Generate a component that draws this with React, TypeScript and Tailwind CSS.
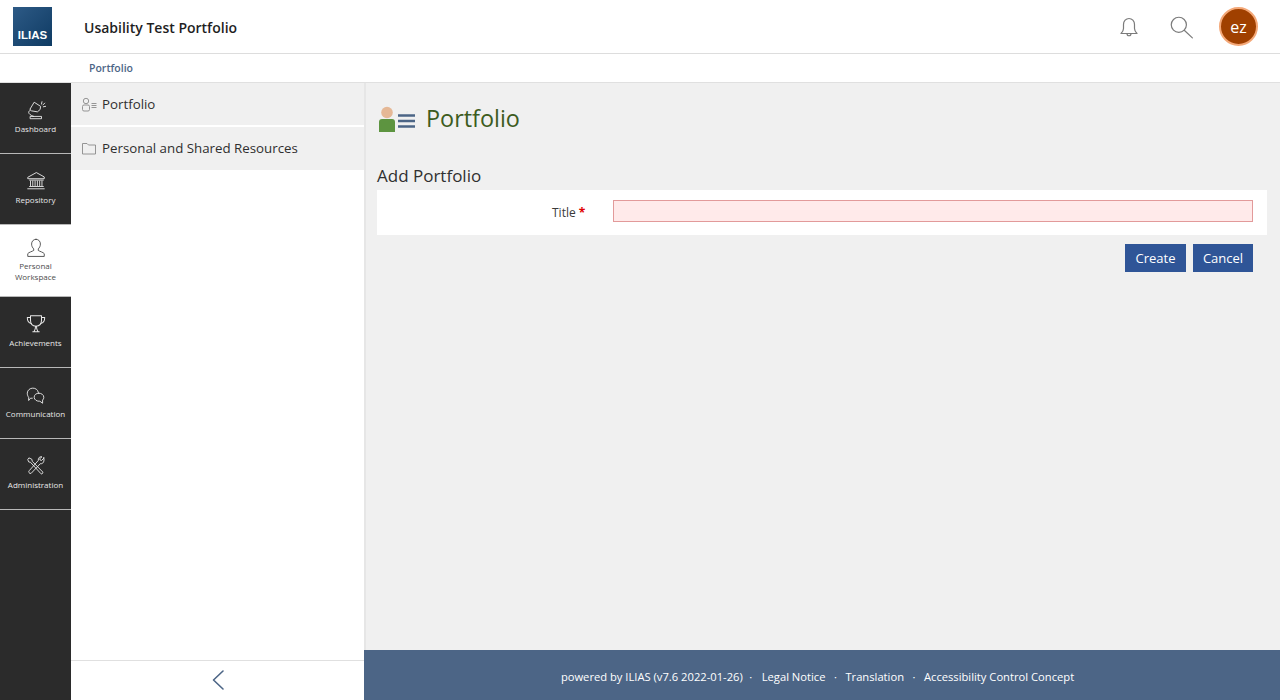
import type { ReactNode } from "react";

function Svg({ size = 24, width = 1.2, color = "currentColor", children }: { size?: number; width?: number; color?: string; children: ReactNode }) {
  return (
    <svg width={size} height={size} viewBox="0 0 24 24" fill="none" stroke={color} strokeWidth={width} strokeLinecap="round" strokeLinejoin="round">
      {children}
    </svg>
  );
}

const nav: { label: string[]; active?: boolean; h: string; icon: ReactNode }[] = [
  {
    label: ["Dashboard"],
    h: "h-[71px]",
    icon: (
      <Svg size={22} width={1}>
        <path d="M6 21.500h12v-2.500H6z" />
        <path d="M9.500 19c-3.500-1-5.500-3-5.500-4.500 0-1 .8-1.800 2-2.500" />
        <path d="M5.500 11L10 3.500l7 4.500-.5 3.500-3 2.500-6-1z" />
        <path d="M18 5.500l.5-2.500M20 8.500l2.500-.5M19.500 6.500l2-2" />
      </Svg>
    ),
  },
  {
    label: ["Repository"],
    h: "h-[71px]",
    icon: (
      <Svg size={22} width={1}>
        <path d="M12 3L3 8v1.500h18V8z" />
        <path d="M6 12v5M8.500 12v5M11 12v5M13.500 12v5M16 12v5M18.500 12v5" />
        <path d="M5 11h15M5 18h15M3 20.500h18" />
      </Svg>
    ),
  },
  {
    label: ["Personal", "Workspace"],
    active: true,
    h: "h-[72px]",
    icon: (
      <Svg size={22} width={1}>
        <path d="M12 2.500c-3 0-4.800 2.300-4.800 5.200 0 2.200 1 4 2.300 5.300v1.700c-1.500 1-5.500 2-6.500 3.500v3h18v-3c-1-1.500-5-2.500-6.500-3.500V13c1.300-1.300 2.300-3.100 2.300-5.300 0-2.900-1.800-5.200-4.800-5.200z" />
      </Svg>
    ),
  },
  {
    label: ["Achievements"],
    h: "h-[71px]",
    icon: (
      <Svg size={22} width={1.1}>
        <path d="M6 3h12v5c0 4-2.500 6.500-6 6.500S6 12 6 8z" />
        <path d="M6 5H2.500c0 3.500 1.500 6 4.500 6.500M18 5h3.500c0 3.500-1.500 6-4.500 6.500" />
        <path d="M11.500 14.500c0 2.500-.5 4-1.500 5.500M12.500 14.500c0 2.500.5 4 1.500 5.500M8.500 20.500h7" />
      </Svg>
    ),
  },
  {
    label: ["Communication"],
    h: "h-[71px]",
    icon: (
      <Svg size={22} width={1}>
        <path d="M8 15.500H6L4 18v-3.500C2.800 13 2.500 11.500 2.500 10c0-3.200 3-5.500 6-5.500s5.500 1.700 6 4.500" />
        <path d="M15 10c3 0 5.500 1.800 5.500 4.500 0 1.300-.5 2.300-1.300 3V21l-3-2.200c-3 .3-6.200-1.500-6.200-4.300 0-2.700 2.200-4.500 5-4.500z" />
      </Svg>
    ),
  },
  {
    label: ["Administration"],
    h: "h-[71px]",
    icon: (
      <Svg size={22} width={1}>
        <path d="M4 3.500L3 5l1 2.500 2 .5 11.500 12.500c1 .7 2.500-.8 1.800-2L8 7 7.500 5z" />
        <path d="M20.500 3.500l-2.500 2.500-1.500-.5-.5-1.500L18.500 2c-2-.7-4.500 1-4 4l-9.800 11c-1.500 1 0 4 2 3l10-10.500c3 .5 4.800-2.500 3.800-6.500z" />
      </Svg>
    ),
  },
];

function NavItem({ label, active, h, icon }: (typeof nav)[number]) {
  const multi = label.length > 1;
  return (
    <div className={`${h} flex flex-col items-center justify-start border-b border-[#b8b8b8] ${multi ? "pt-[12px]" : "pt-[16px]"} ${active ? "bg-white text-[#4c4c4c]" : "text-[#e8e8e8]"}`}>
      {icon}
      <div className={`text-center text-[8px] leading-[11px] ${multi ? "mt-[1px]" : "mt-[2px]"}`}>
        {label.map((l) => (
          <div key={l}>{l}</div>
        ))}
      </div>
    </div>
  );
}

export default function App() {
  return (
    <div className="flex h-[700px] w-[1280px] flex-col overflow-hidden bg-white font-['Open_Sans',sans-serif] text-[#1f1f1f]">
      {/* header */}
      <header className="flex h-[54px] shrink-0 items-center border-b border-[#dddddd] pl-[13px] pr-[22px]">
        <div className="flex h-[39px] w-[39px] shrink-0 items-end justify-center bg-gradient-to-br from-[#2d5a86] to-[#0e3b63] pb-[5px] font-['Liberation_Sans',sans-serif] text-[11.500px] font-bold leading-none text-white">
          ILIAS
        </div>
        <div className="ml-[32px] flex-1 pt-[1px] text-[14px] font-semibold">Usability Test Portfolio</div>
        <div className="mr-[14px] text-[#7b7b7b]">
          <Svg size={24} width={1.2}>
            <path d="M4 18.500c1.500-1.500 2.500-2.500 2.500-5V9.500C6.500 6 9 3.500 12 3.500s5.500 2.500 5.500 6v4c0 2.500 1 3.500 2.500 5z" />
            <path d="M10 18.500c0 3 4 3 4 0" />
          </Svg>
        </div>
        <div className="ml-[13px] mr-[25px] text-[#7b7b7b]">
          <Svg size={26} width={1.1}>
            <circle cx="10" cy="10" r="7" />
            <path d="M15 15l7.500 7" />
          </Svg>
        </div>
        <div className="flex h-[39px] w-[39px] items-center justify-center rounded-full border-2 border-[#f4a878] bg-[#a04000] text-[16px] text-white">ez</div>
      </header>

      {/* breadcrumb */}
      <div className="flex h-[29px] shrink-0 items-center border-b border-[#e0e0e0] pl-[89px] pt-[2px] text-[10.500px] font-semibold text-[#4c6586]">Portfolio</div>

      <div className="flex min-h-0 flex-1">
        {/* main bar */}
        <nav className="w-[71px] shrink-0 bg-[#2b2b2b]">
          {nav.map((n) => (
            <NavItem key={n.label.join(" ")} {...n} />
          ))}
        </nav>

        {/* slate */}
        <aside className="flex w-[293px] shrink-0 flex-col bg-white">
          <div className="flex h-[44px] items-center gap-[5px] border-b-2 border-white bg-[#f0f0f0] pl-[10px] pt-[1px] text-[13.300px] text-[#2f2f2f]">
            <svg width="16" height="16" viewBox="0 0 16 16" fill="none" stroke="#8a8a8a" strokeWidth="0.900">
              <circle cx="5" cy="4" r="2.700" />
              <rect x="1.500" y="8" width="7" height="6" rx="1.500" />
              <path d="M10.500 6.500h5M10.500 8.500h5M10.500 10.500h5" />
            </svg>
            <span>Portfolio</span>
          </div>
          <div className="flex h-[43px] items-center gap-[5px] bg-[#f0f0f0] pl-[10px] text-[13.300px] text-[#2f2f2f]">
            <svg width="16" height="16" viewBox="0 0 16 16" fill="none" stroke="#8a8a8a" strokeWidth="0.900" strokeLinejoin="round">
              <path d="M1.500 2.500h4.500l1.500 1.500h7v9h-13z" />
            </svg>
            <span>Personal and Shared Resources</span>
          </div>
          <div className="flex-1" />
          <div className="flex h-[40px] items-center justify-center border-t border-[#e0e0e0] pb-[2px]">
            <svg width="14" height="24" viewBox="0 0 14 24" fill="none" stroke="#4c6586" strokeWidth="1.600" strokeLinecap="round" strokeLinejoin="round">
              <path d="M12 3L2.500 12 12 21" />
            </svg>
          </div>
        </aside>

        {/* content */}
        <main className="flex min-w-0 flex-1 flex-col">
          <div className="flex-1 border-l-2 border-[#e6e6e6] bg-[#f0f0f0] pl-[11px] pr-[13px]">
            <div className="flex items-center pt-[19px]">
              <svg width="38" height="32" viewBox="0 0 38 32">
                <circle cx="10" cy="10.500" r="5.800" fill="#e5b896" />
                <path d="M2 30V20c0-2 1-3 3-3h10c2 0 3 1 3 3v10z" fill="#5d9440" />
                <path d="M21 13.500h17M21 19h17M21 24.500h17" stroke="#4c6586" strokeWidth="2.600" />
              </svg>
              <h1 className="ml-[11px] text-[23.400px] font-normal leading-[32px] text-[#3d5c1e]">Portfolio</h1>
            </div>
            <h2 className="mt-[30px] text-[17px] font-normal leading-[23px] text-[#2f2f2f]">Add Portfolio</h2>
            <div className="mt-[3px] flex h-[45px] items-center bg-white pl-[175px] pr-[14px]">
              <label className="w-[61px] shrink-0 text-[12px] text-[#3a3a3a]">
                Title <span className="font-bold text-[#e00000]">*</span>
              </label>
              <div className="mb-[4px] h-[22px] flex-1 border border-[#e29a9a] bg-[#ffeaea]" />
            </div>
            <div className="mt-[9px] flex justify-end gap-[7px] pr-[14px]">
              <button className="h-[28px] w-[61px] bg-[#2f5597] pt-[1px] text-[13px] text-white">Create</button>
              <button className="h-[28px] w-[60px] bg-[#2f5597] pt-[1px] text-[13px] text-white">Cancel</button>
            </div>
          </div>
          <footer className="flex h-[50px] shrink-0 items-center justify-center gap-[6.500px] bg-[#4c6586] pr-[9px] pt-[4px] text-[11.200px] text-white">
            <span>powered by ILIAS (v7.6 2022-01-26)</span>
            <span>·</span>
            <span className="ml-[3px]">Legal Notice</span>
            <span className="ml-[2px]">·</span>
            <span className="ml-[2px]">Translation</span>
            <span className="ml-[2px]">·</span>
            <span className="ml-[2px]">Accessibility Control Concept</span>
          </footer>
        </main>
      </div>
    </div>
  );
}
